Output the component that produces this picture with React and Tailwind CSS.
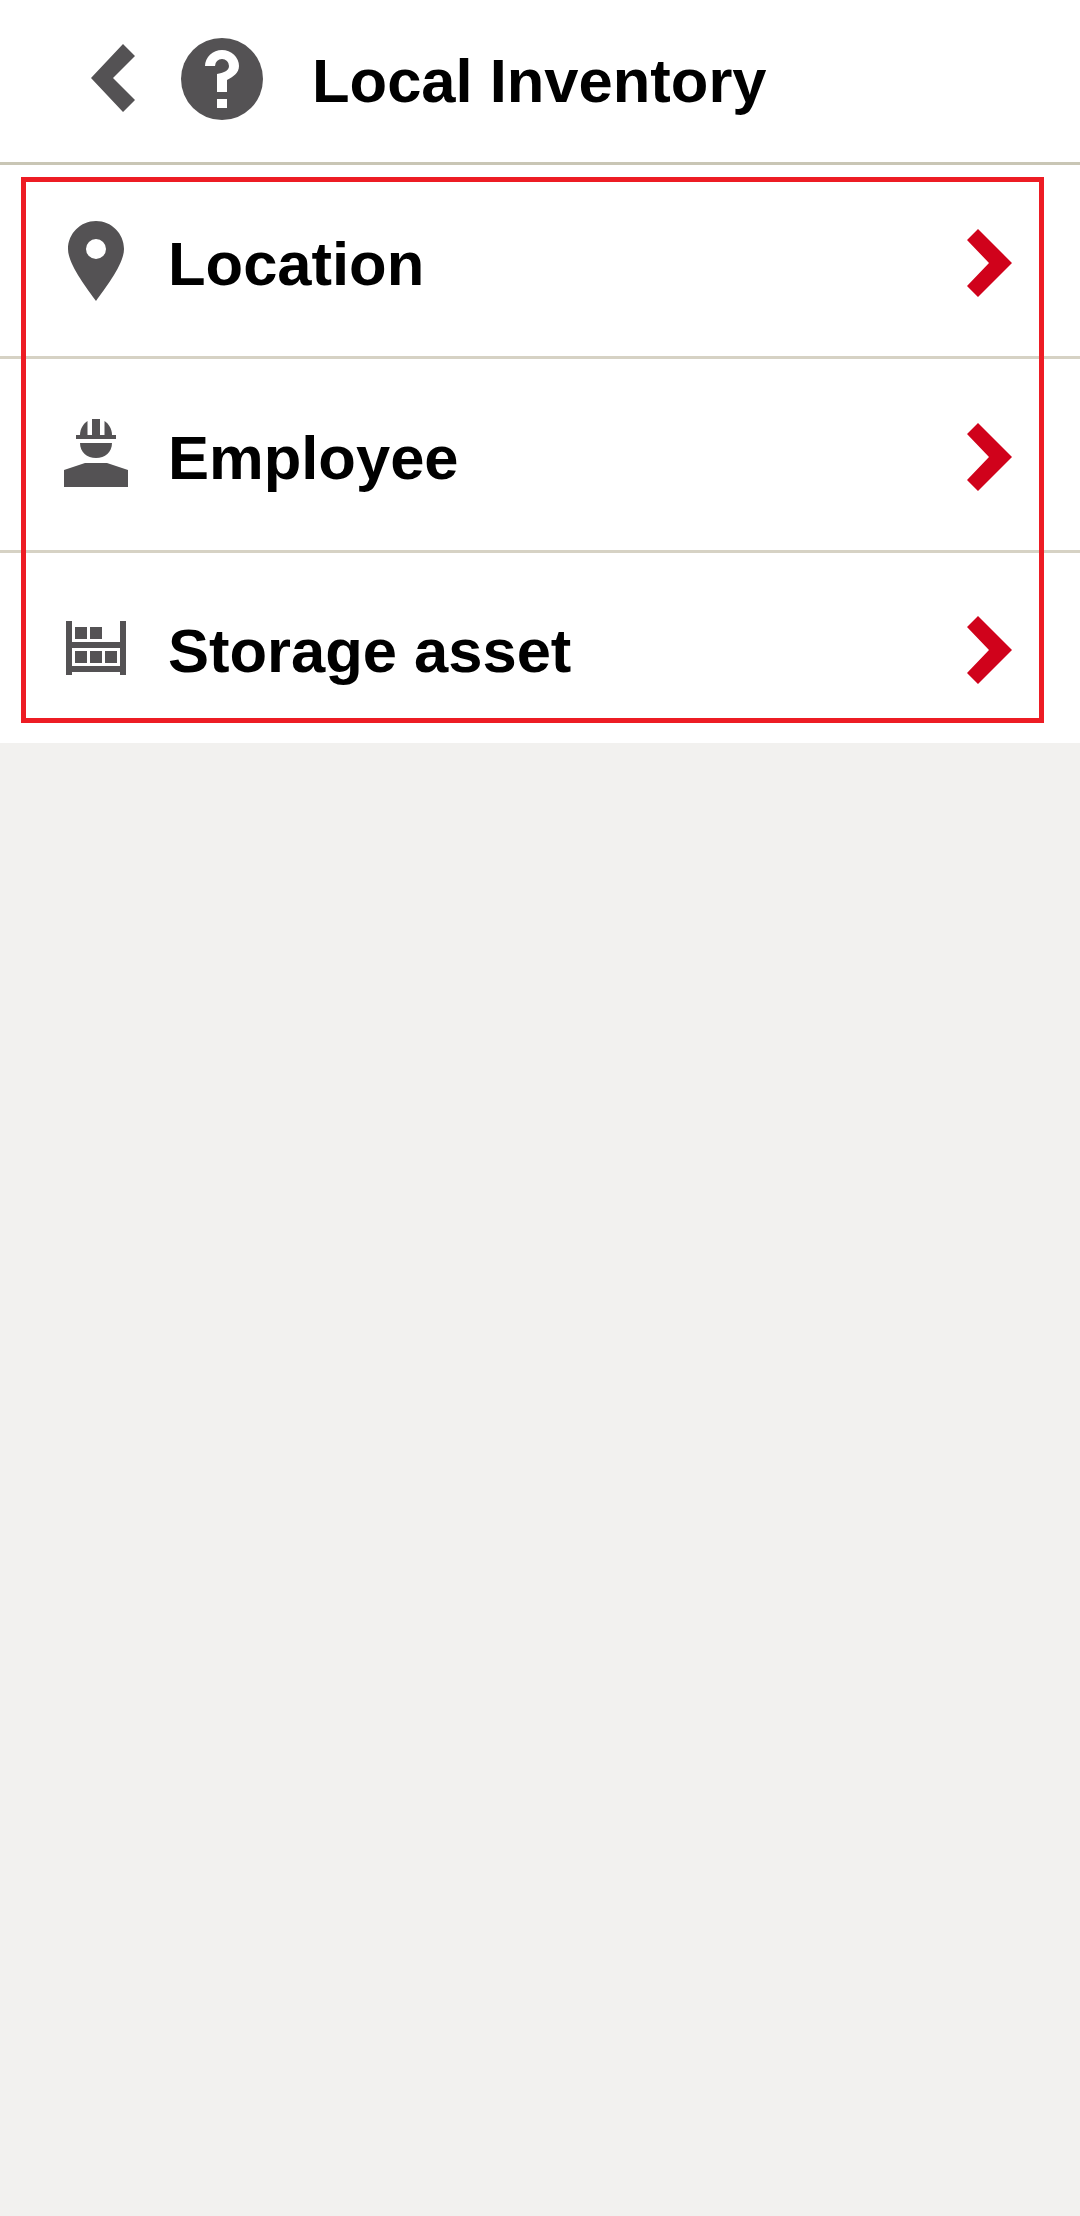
const rows = [
  { label: "Location", icon: <PinIcon />, iconClass: "mb-[4px]" },
  { label: "Employee", icon: <WorkerIcon />, iconClass: "mb-[8px]" },
  { label: "Storage asset", icon: <ShelfIcon />, iconClass: "mb-[4px]" },
];

function BackIcon() {
  return (
    <svg viewBox="0 0 44 68" className="w-[44px] h-[68px] fill-[#545254]">
      <path d="M0 34 32 0 44 12 22 34 44 56 32 68Z" />
    </svg>
  );
}

function HelpIcon() {
  return (
    <svg viewBox="0 0 84 84" className="w-[84px] h-[84px]">
      <circle cx="42" cy="42" r="41" fill="#545254" />
      <path
        d="M25 29A17 16 0 0 1 59 29C59 36 53 40 47 43V55H37V37C43 36 49 34 49 29A7 7 0 0 0 35 29Z"
        fill="#fff"
      />
      <rect x="37" y="62" width="10" height="9" fill="#fff" />
    </svg>
  );
}

function PinIcon() {
  return (
    <svg viewBox="0 0 56 80" className="w-[56px] h-[80px] fill-[#545254]">
      <path
        fillRule="evenodd"
        d="M28 0C12.5 0 0 12.5 0 28 0 43 18 66 28 80 38 66 56 43 56 28 56 12.5 43.500 0 28 0ZM28 18A10 10 0 1 1 28 38 10 10 0 1 1 28 18Z"
      />
    </svg>
  );
}

function WorkerIcon() {
  return (
    <svg viewBox="0 0 64 68" className="w-[64px] h-[68px] fill-[#545254]">
      <path d="M16 16C16 10 19 5 23.500 2V16Z" />
      <rect x="28" y="0" width="8" height="16" />
      <path d="M40.500 2C45 5 48 10 48 16H40.500Z" />
      <rect x="12" y="16" width="40" height="4" />
      <path d="M16 24H48C48 33 41 39 32 39 23 39 16 33 16 24Z" />
      <path d="M21 44H43L64 51V68H0V51Z" />
    </svg>
  );
}

function ShelfIcon() {
  return (
    <svg viewBox="0 0 60 54" className="w-[60px] h-[54px] fill-[#545254]">
      <rect x="0" y="0" width="6" height="54" />
      <rect x="54" y="0" width="6" height="54" />
      <rect x="6" y="21" width="48" height="6" />
      <rect x="6" y="45" width="48" height="6" />
      <rect x="9" y="6" width="12" height="12" />
      <rect x="24" y="6" width="12" height="12" />
      <rect x="9" y="30" width="12" height="12" />
      <rect x="24" y="30" width="12" height="12" />
      <rect x="39" y="30" width="12" height="12" />
    </svg>
  );
}

function ChevronIcon() {
  return (
    <svg viewBox="0 0 45 68" className="w-[45px] h-[68px] fill-[#d0021b]">
      <path d="M45 34 11 68 0 57 22 34 0 11 11 0Z" />
    </svg>
  );
}

export default function App() {
  return (
    <div
      className="relative min-h-screen bg-[#f2f1ef] text-black"
      style={{ fontFamily: '"Liberation Sans", Arial, sans-serif' }}
    >
      {/* Header */}
      <div className="h-[165px] flex items-center bg-white border-b-[3px] border-[#c9c6b5] pl-[91px] pb-[6px]">
        <BackIcon />
        <div className="ml-[45px] mt-[2px]">
          <HelpIcon />
        </div>
        <h1 className="ml-[48px] mt-[6px] text-[61.5px] leading-none font-bold">Local Inventory</h1>
      </div>

      {/* Menu rows */}
      <div className="bg-white">
        {rows.map((row, i) => (
          <div
            key={row.label}
            className={
              i < rows.length - 1
                ? "h-[194px] flex items-center pt-[4px] pr-[68px] border-b-[3px] border-[#d6d2c4]"
                : "h-[190px] flex items-center pt-[4px] pr-[68px]"
            }
          >
            <div className={`ml-[61px] w-[70px] mr-[37px] flex justify-center shrink-0 ${row.iconClass}`}>
              {row.icon}
            </div>
            <span className="flex-1 mt-[2px] text-[61.5px] leading-none font-bold">{row.label}</span>
            <ChevronIcon />
          </div>
        ))}
      </div>

      {/* Red highlight frame, annotation on top of the list */}
      <div className="absolute left-[21px] top-[177px] w-[1023px] h-[546px] border-[5px] border-[#ed1c24] pointer-events-none" />
    </div>
  );
}
